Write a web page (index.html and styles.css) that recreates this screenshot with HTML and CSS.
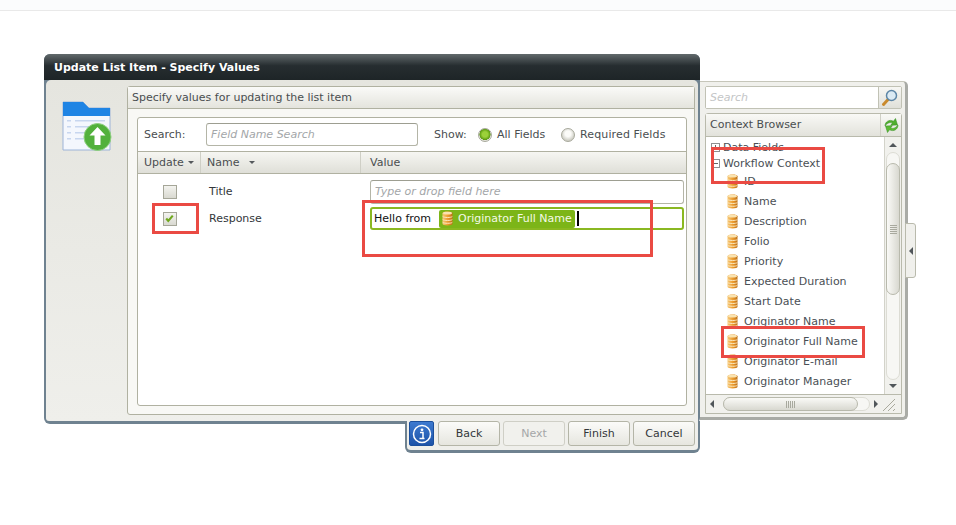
FILE: index.html
```html
<!DOCTYPE html>
<html lang="en">
<head>
<meta charset="utf-8">
<title>Update List Item - Specify Values</title>
<link rel="stylesheet" href="styles.css">
</head>
<body>
<svg class="defs" width="0" height="0" aria-hidden="true">
  <defs>
    <linearGradient id="gold" x1="0" x2="1" y1="0" y2="0">
      <stop offset="0" stop-color="#f6c878"/><stop offset=".55" stop-color="#ec9a2c"/><stop offset="1" stop-color="#bd6f16"/>
    </linearGradient>
    <symbol id="db" viewBox="0 0 11 15">
      <path d="M.5 2.2C.5 1 2.700.5 5.500.5s5 .5 5 1.700v10.600c0 1.200-2.200 1.700-5 1.700s-5-.5-5-1.700z" fill="url(#gold)"/>
      <ellipse cx="5.500" cy="2.200" rx="4.500" ry="1.400" fill="#f9e3b0"/>
      <path d="M.7 5.500c1 1.300 8.600 1.300 9.600 0M.7 8.500c1 1.300 8.600 1.300 9.600 0M.7 11.300c1 1.300 8.600 1.300 9.600 0" fill="none" stroke="#fbe9c0" stroke-width="1"/>
    </symbol>
  </defs>
</svg>

<header class="topbar">
  <span class="tab tab-a">Attachment</span>
  <span class="tab tab-b">Attachment</span>
  <span class="tab tab-c">Attachment</span>
  <span class="tab tab-d">Attachment</span>
</header>

<section class="wizard">
  <h1 class="wizard-title">Update List Item - Specify Values</h1>
  <div class="wizard-body">
    <div class="wizard-icon">
      <svg width="50" height="50" viewBox="0 0 50 50">
        <path d="M1 1h20l6 6h21v42H1z" fill="#f4f7fd" stroke="#9db4d8"/>
        <path d="M1 1h20l6 6h21v8H1z" fill="#1f84e4"/>
        <g fill="#c7d6ef"><rect x="5" y="19" width="4" height="1.500"/><rect x="5" y="25" width="4" height="1.500"/><rect x="5" y="31" width="4" height="1.500"/><rect x="5" y="37" width="4" height="1.500"/><rect x="13" y="19" width="30" height="1.500"/><rect x="13" y="25" width="30" height="1.500"/><rect x="13" y="31" width="24" height="1.500"/><rect x="13" y="37" width="20" height="1.500"/></g>
        <circle cx="35.500" cy="36" r="13.500" fill="#52b13c" stroke="#8fd080"/>
        <path d="M35.500 26l8 8.500h-5V44h-6v-9.500h-5z" fill="#fff"/>
      </svg>
    </div>
    <div class="panel">
      <div class="panel-head">Specify values for updating the list item</div>
      <div class="grid-box">
        <div class="filter-row">
          <label class="filter-label">Search:</label>
          <div class="input search-input">Field Name Search</div>
          <span class="show-label">Show:</span>
          <span class="radio radio-on"></span><span class="radio-text">All Fields</span>
          <span class="radio radio-off"></span><span class="radio-text">Required Fields</span>
        </div>
        <div class="grid-head">
          <div class="col col-update">Update<i class="caret"></i></div>
          <div class="col col-name">Name<i class="caret caret-name"></i></div>
          <div class="col col-value">Value</div>
        </div>
        <div class="grid-row">
          <div class="cell-check"><span class="check"></span></div>
          <div class="cell-name">Title</div>
          <div class="input value-input">Type or drop field here</div>
        </div>
        <div class="grid-row">
          <div class="cell-check"><span class="check">
            <svg width="9" height="9" viewBox="0 0 11 10"><path d="M1.500 5l2.500 3 5.500-6.500" fill="none" stroke="#6fa81e" stroke-width="2.600"/></svg>
          </span></div>
          <div class="cell-name">Response</div>
          <div class="value-active">
            <span class="value-text">Hello from</span>
            <span class="token"><svg class="db" width="11" height="15"><use href="#db"/></svg>Originator Full Name</span>
            <span class="cursor"></span>
          </div>
        </div>
      </div>
    </div>
  </div>
  <footer class="wizard-foot">
    <button class="info-btn" type="button" aria-label="Info">
      <svg width="20" height="20" viewBox="0 0 20 20"><circle cx="10" cy="10" r="8.500" fill="none" stroke="#fff" stroke-width="1.500"/><circle cx="10" cy="5.800" r="1.400" fill="#fff"/><path d="M8 8.500h3v6h1.500M7.500 14.500h3" fill="none" stroke="#fff" stroke-width="1.500"/></svg>
    </button>
    <button class="btn" type="button">Back</button>
    <button class="btn btn-off" type="button">Next</button>
    <button class="btn" type="button">Finish</button>
    <button class="btn" type="button">Cancel</button>
  </footer>
</section>

<aside class="browser">
  <div class="browser-search">
    <div class="browser-input">Search</div>
    <div class="browser-go">
      <svg width="18" height="18" viewBox="0 0 18 18"><path d="M7 10.500l-4.500 5" stroke="#c98a2c" stroke-width="3" stroke-linecap="round"/><circle cx="10.500" cy="6.500" r="5" fill="#dbeaf3" stroke="#5d86a6" stroke-width="1.500"/></svg>
    </div>
  </div>
  <div class="browser-main">
    <div class="browser-head">
      <span class="browser-title">Context Browser</span>
      <span class="browser-refresh">
        <svg width="17" height="17" viewBox="0 0 17 17"><path d="M2 9C2 4.500 6.500 2 10.500 4.200L12.500 1.500l2 6.500-6.800.3 1.700-2.300C6.500 4.800 4 6.500 2 9z" fill="#4fae2e" stroke="#2f8a1c" stroke-width=".5"/><path d="M15 8c0 4.500-4.500 7-8.500 4.800L4.500 15.500l-2-6.500 6.800-.3-1.700 2.300c2.900 1.200 5.400-.5 7.400-3z" fill="#5cbb34" stroke="#2f8a1c" stroke-width=".5"/></svg>
      </span>
    </div>
    <div class="tree-wrap">
      <ul class="tree">
        <li class="tree-root"><i class="exp exp-plus"></i>Data Fields</li>
        <li class="tree-root tree-root-2"><i class="exp"></i>Workflow Context</li>
        <li class="leaf"><svg width="11" height="15"><use href="#db"/></svg>ID</li>
        <li class="leaf"><svg width="11" height="15"><use href="#db"/></svg>Name</li>
        <li class="leaf"><svg width="11" height="15"><use href="#db"/></svg>Description</li>
        <li class="leaf"><svg width="11" height="15"><use href="#db"/></svg>Folio</li>
        <li class="leaf"><svg width="11" height="15"><use href="#db"/></svg>Priority</li>
        <li class="leaf"><svg width="11" height="15"><use href="#db"/></svg>Expected Duration</li>
        <li class="leaf"><svg width="11" height="15"><use href="#db"/></svg>Start Date</li>
        <li class="leaf"><svg width="11" height="15"><use href="#db"/></svg>Originator Name</li>
        <li class="leaf"><svg width="11" height="15"><use href="#db"/></svg>Originator Full Name</li>
        <li class="leaf"><svg width="11" height="15"><use href="#db"/></svg>Originator E-mail</li>
        <li class="leaf"><svg width="11" height="15"><use href="#db"/></svg>Originator Manager</li>
        <li class="leaf"><svg width="11" height="15"><use href="#db"/></svg></li>
      </ul>
      <div class="vscroll">
        <i class="arrow arrow-up"></i>
        <div class="vtrack"><div class="vthumb"><span class="grip-h"></span></div></div>
        <i class="arrow arrow-down"></i>
      </div>
    </div>
    <div class="hscroll">
      <i class="arrow arrow-left"></i>
      <div class="htrack"><div class="hthumb"><span class="grip-v"></span></div></div>
      <i class="arrow arrow-right"></i>
      <svg class="resize" width="15" height="15" viewBox="0 0 15 15"><path d="M2 14L14 2M7 14l7-7M12 14l2-2" stroke="#a9a99c" fill="none"/></svg>
    </div>
  </div>
</aside>

<button class="side-tab" type="button" aria-label="Collapse"><i class="arrow arrow-left"></i></button>

<div class="mark mark-a"></div>
<div class="mark mark-b"></div>
<div class="mark mark-c"></div>
<div class="mark mark-d"></div>
</body>
</html>
```

FILE: styles.css
```css
* { box-sizing: border-box; }
html, body { height: 100%; }
body {
  margin: 0;
  overflow: hidden;
  background: #fff;
  font-family: "DejaVu Sans", sans-serif;
  font-size: 11px;
  color: #3f4448;
  position: relative;
}
.defs { position: absolute; }

.topbar {
  height: 11px;
  background: #fbfcfd;
  border-bottom: 1px solid #e9e9e9;
  position: relative;
  overflow: hidden;
}
.tab {
  position: absolute;
  top: -10px;
  color: #d4d6d8;
  font-size: 10px;
}
.tab-a { left: 150px; }
.tab-b { left: 445px; }
.tab-c { left: 551px; }
.tab-d { left: 656px; }

/* Wizard window */
.wizard {
  position: absolute;
  left: 44px;
  top: 54px;
  width: 656px;
  height: 370px;
  background: #6f8290;
  border-radius: 6px;
  padding: 0 2px 3px;
  display: flex;
  flex-direction: column;
}
.wizard-title {
  margin: 0 -2px;
  height: 26px;
  padding: 0 10px;
  line-height: 27px;
  font-size: 11px;
  font-weight: bold;
  color: #fff;
  background: linear-gradient(#626a6c, #262d30 45%, #1e2527);
  border-radius: 6px 6px 0 0;
}
.wizard-body {
  flex: 1;
  min-height: 0;
  display: flex;
  background: linear-gradient(#e5e5df, #efefeb);
  border-radius: 5px 5px 0 3px;
  padding: 6px 3px 6px 0;
}
.wizard-icon {
  width: 81px;
  padding: 15px 0 0 16px;
  flex: none;
}
.panel {
  flex: 1;
  min-width: 0;
  display: flex;
  flex-direction: column;
  background: #f8f8f5;
  border: 1px solid #b0b1a1;
  border-radius: 3px;
  padding-bottom: 8px;
}
.panel-head {
  height: 22px;
  line-height: 21px;
  padding-left: 4px;
  background: linear-gradient(#fafaf8, #e4e4dd);
  border-bottom: 1px solid #b0b1a1;
  color: #4a4e50;
}
.grid-box {
  flex: 1;
  margin: 8px 7px 0 9px;
  background: #fff;
  border: 1px solid #b0b1a1;
  border-radius: 3px;
}
.filter-row {
  height: 33px;
  display: flex;
  align-items: center;
  padding-left: 6px;
}
.filter-label { width: 62px; color: #4a4e50; }
.input {
  background: #fff;
  border: 1px solid #b4b5a7;
  border-top-color: #9d9e91;
  border-radius: 3px;
  color: #a3a6a8;
  font-style: italic;
}
.search-input {
  width: 212px;
  height: 23px;
  line-height: 21px;
  padding-left: 4px;
}
.show-label { margin-left: 16px; width: 45px; color: #4a4e50; }
.radio {
  width: 14px;
  height: 14px;
  border-radius: 50%;
  border: 1px solid #a7a89b;
  margin-right: 5px;
  flex: none;
  margin-left: -1px;
}
.radio-on { background: radial-gradient(circle at 50% 45%, #9bd13a 0 30%, #5b9a10 60%, #e5e5dd 65%); }
.radio-off { background: radial-gradient(circle at 50% 40%, #fbfbf8 0 30%, #cfcfc6 70%); }
.radio-text { width: 65px; color: #4a4e50; }
.radio-text:last-child { width: auto; letter-spacing: .13px; }

.grid-head {
  height: 23px;
  display: flex;
  background: linear-gradient(#f6f6f2, #dfdfd8);
  border-top: 1px solid #b0b1a1;
  border-bottom: 1px solid #b0b1a1;
  line-height: 21px;
  color: #4a4e50;
}
.col { padding-left: 6px; }
.col-update { width: 63px; border-right: 1px solid #cfcfc6; }
.col-name { width: 160px; border-right: 1px solid #cfcfc6; }
.col-value { flex: 1; padding-left: 9px; }
.caret {
  display: inline-block;
  margin-left: 4px;
  vertical-align: 2px;
  border: 3px solid transparent;
  border-top-color: #55595c;
  border-bottom: 0;
}
.caret-name { margin-left: 10px; }

.grid-row {
  display: flex;
  align-items: center;
  height: 27px;
  color: #33373a;
}
.grid-row:nth-child(3) { margin-top: 4px; }
.cell-check { width: 63px; display: flex; justify-content: center; }
.check {
  width: 14px;
  height: 14px;
  border: 1px solid #a5a698;
  background: linear-gradient(#f3f3ef, #d9d9d1);
  display: flex;
  align-items: center;
  justify-content: center;
}
.cell-name { width: 169px; padding-left: 8px; }
.value-input {
  width: 314px;
  height: 24px;
  line-height: 22px;
  padding-left: 4px;
}
.value-active {
  width: 314px;
  height: 23px;
  align-self: flex-start;
  margin-top: 2px;
  border: 2px solid #8ab821;
  border-radius: 3px;
  display: flex;
  align-items: center;
  padding-left: 2px;
  color: #111;
}
.value-text { margin-right: 8px; }
.token {
  display: inline-flex;
  align-items: center;
  height: 18px;
  padding: 0 3px;
  gap: 5px;
  background: #7cb518;
  border-radius: 2px;
  color: #f4f9e6;
}
.cursor {
  width: 2px;
  height: 15px;
  margin-left: 2px;
  background: #000;
}

.wizard-foot {
  position: absolute;
  left: 361px;
  top: 367px;
  width: 295px;
  height: 32px;
  padding: 0 3px 0 2px;
  display: flex;
  gap: 3px;
  background: #efefeb;
  border: 2px solid #6f8290;
  border-top: 0;
  border-bottom-width: 3px;
  border-radius: 0 0 6px 6px;
}
.info-btn {
  width: 25px;
  height: 25px;
  margin-right: 1px;
  padding: 0;
  border: 1px solid #1b4f9c;
  border-radius: 2px;
  background: linear-gradient(#3d7ad0, #1d53a8);
  display: flex;
  align-items: center;
  justify-content: center;
}
.btn {
  width: 62px;
  height: 25px;
  padding: 0;
  border: 1px solid #b4b5a7;
  border-radius: 3px;
  background: linear-gradient(#fbfbf9, #e6e6df);
  font: inherit;
  color: #33373a;
}
.btn-off { color: #a5a7a8; background: #f1f1ed; border-color: #cfcfc6; }

/* Context browser */
.browser {
  position: absolute;
  left: 700px;
  top: 81px;
  width: 208px;
  height: 339px;
  background: #f0f0ec;
  border: 1px solid #c6c6ba;
  border-left: 0;
  border-right: 3px solid #a9aba6;
  border-bottom: 3px solid #a9aba6;
  border-radius: 0 5px 5px 0;
  padding: 4px 3px 3px 5px;
  display: flex;
  flex-direction: column;
}
.browser-search {
  height: 23px;
  display: flex;
  border: 1px solid #c1c2b5;
  border-radius: 2px;
  margin-bottom: 4px;
}
.browser-input {
  flex: 1;
  background: #fff;
  color: #c3c5c6;
  font-style: italic;
  padding-left: 4px;
  line-height: 21px;
}
.browser-go {
  width: 23px;
  border-left: 1px solid #c1c2b5;
  background: linear-gradient(#f7f7f4, #e0e0d9);
  display: flex;
  align-items: center;
  justify-content: center;
}
.browser-main {
  flex: 1;
  min-height: 0;
  border: 1px solid #b9baac;
  border-radius: 3px 3px 0 0;
  display: flex;
  flex-direction: column;
  width: 197px;
}
.browser-head {
  height: 23px;
  flex: none;
  display: flex;
  background: linear-gradient(#f9f9f6, #e2e2db);
  border-bottom: 1px solid #b9baac;
  line-height: 21px;
}
.browser-title { flex: 1; padding-left: 4px; color: #4a4e50; }
.browser-refresh {
  width: 21px;
  border-left: 1px solid #d0d0c6;
  display: flex;
  align-items: center;
  justify-content: center;
}
.tree-wrap {
  flex: 1;
  min-height: 0;
  display: flex;
  overflow: hidden;
}
.tree {
  flex: 1;
  min-width: 0;
  list-style: none;
  margin: 0;
  padding: 0;
  background: #fff;
  overflow: hidden;
  color: #4a4f55;
}
.tree-root {
  height: 17px;
  line-height: 17px;
  display: flex;
  align-items: center;
  margin-top: 2px;
  padding-left: 5px;
  gap: 3px;
}
.tree-root-2 { margin-top: 0; height: 15px; margin-bottom: 0; }
.exp {
  width: 9px;
  height: 9px;
  border: 1px solid #8f9091;
  position: relative;
  flex: none;
}
.exp::before {
  content: "";
  position: absolute;
  left: 1px;
  top: 3px;
  width: 5px;
  height: 1px;
  background: #666;
}
.exp-plus::after {
  content: "";
  position: absolute;
  left: 3px;
  top: 1px;
  width: 1px;
  height: 5px;
  background: #666;
}
.leaf {
  height: 20px;
  display: flex;
  align-items: center;
  padding-left: 21px;
  gap: 6px;
  white-space: nowrap;
}

.vscroll {
  width: 17px;
  flex: none;
  background: #f1f1ed;
  border-left: 1px solid #d3d3ca;
  display: flex;
  flex-direction: column;
  align-items: center;
}
.arrow {
  display: block;
  flex: none;
  width: 0;
  height: 0;
  border: 4px solid transparent;
}
.arrow-up { border-bottom-color: #50565a; border-top: 0; margin: 6px 0 5px; }
.arrow-down { border-top-color: #50565a; border-bottom: 0; margin: 4px 0 6px; }
.arrow-left { border-right-color: #50565a; border-left: 0; }
.arrow-right { border-left-color: #50565a; border-right: 0; }
.vtrack {
  flex: 1;
  width: 14px;
  border: 1px solid #dcdcd4;
  border-radius: 7px;
  background: #f7f7f4;
  padding-top: 10px;
}
.vthumb {
  height: 132px;
  border: 1px solid #b8b9ac;
  border-radius: 7px;
  background: linear-gradient(90deg, #fafaf7, #d8d8d0);
  margin: 0 -1px;
  display: flex;
  align-items: center;
  justify-content: center;
}
.grip-h {
  width: 7px;
  height: 9px;
  background: repeating-linear-gradient(#a8a99e 0 1px, transparent 1px 2px);
}
.hscroll {
  height: 19px;
  flex: none;
  display: flex;
  align-items: center;
  background: #f1f1ed;
  border-top: 1px solid #b9baac;
  padding-left: 4px;
}
.htrack {
  width: 147px;
  height: 14px;
  margin: 0 4px 0 9px;
  border: 1px solid #dcdcd4;
  border-radius: 7px;
  background: #f7f7f4;
}
.hthumb {
  width: 135px;
  height: 14px;
  margin: -1px 0 0 -1px;
  border: 1px solid #b8b9ac;
  border-radius: 7px;
  background: linear-gradient(#fafaf7, #d8d8d0);
  display: flex;
  align-items: center;
  justify-content: center;
}
.grip-v {
  width: 9px;
  height: 7px;
  background: repeating-linear-gradient(90deg, #a8a99e 0 1px, transparent 1px 2px);
}
.resize { margin-left: 3px; }

.side-tab {
  position: absolute;
  left: 905px;
  top: 223px;
  width: 11px;
  height: 55px;
  padding: 0;
  background: #f0f0ec;
  border: 1px solid #b9baac;
  border-radius: 0 3px 3px 0;
  display: flex;
  align-items: center;
  justify-content: center;
}

/* Red annotation boxes drawn over the screenshot */
.mark {
  position: absolute;
  border: 3px solid #ea4a43;
  pointer-events: none;
}
.mark-a { left: 152px; top: 203px; width: 47px; height: 31px; }
.mark-b { left: 362px; top: 200px; width: 291px; height: 57px; }
.mark-c { left: 711px; top: 147px; width: 114px; height: 37px; }
.mark-d { left: 721px; top: 326px; width: 144px; height: 32px; }
```
